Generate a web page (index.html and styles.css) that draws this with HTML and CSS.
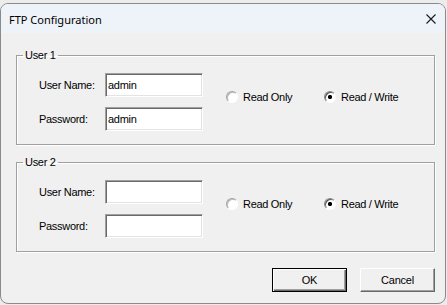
FILE: index.html
```html
<!DOCTYPE html>
<html>
<head>
	<title>FTP Configuration</title>
	<link rel="stylesheet" href="styles.css">
</head>
<body>
	<div class="window">
		<div class="titlebar">
			<span class="title">FTP Configuration</span>
			<svg class="close" width="10" height="10" viewBox="0 0 10 10">
				<path d="M0.5 0.5 L9.5 9.5 M9.5 0.5 L0.5 9.5" stroke="#1a1a1a" stroke-width="1.1" fill="none"/>
			</svg>
		</div>

		<div class="content">
			<fieldset class="group">
				<legend>User 1</legend>
				<div class="group-body">
					<div class="fields">
						<div class="field">
							<label>User Name:</label>
							<input type="text" class="text" value="admin">
						</div>
						<div class="field">
							<label>Password:</label>
							<input type="text" class="text" value="admin">
						</div>
					</div>
					<div class="access">
						<label class="radio first"><input type="radio" name="user1"> Read Only</label>
						<label class="radio"><input type="radio" name="user1" checked> Read / Write</label>
					</div>
				</div>
			</fieldset>

			<fieldset class="group">
				<legend>User 2</legend>
				<div class="group-body">
					<div class="fields">
						<div class="field">
							<label>User Name:</label>
							<input type="text" class="text" value="">
						</div>
						<div class="field">
							<label>Password:</label>
							<input type="text" class="text" value="">
						</div>
					</div>
					<div class="access">
						<label class="radio first"><input type="radio" name="user2"> Read Only</label>
						<label class="radio"><input type="radio" name="user2" checked> Read / Write</label>
					</div>
				</div>
			</fieldset>

			<div class="buttons">
				<button class="btn default">OK</button>
				<button class="btn">Cancel</button>
			</div>
		</div>
	</div>
</body>
</html>
```

FILE: styles.css
```css
body {
	margin: 0;
	padding: 3px 0 0;
	background-color: #ececec;
	font-family: "Liberation Sans", Arial, sans-serif;
	font-size: 11px;
	letter-spacing: -0.3px;
	color: #000;
}

.window {
	box-sizing: border-box;
	width: 446px;
	height: 301px;
	border: 1px solid #8a8a8a;
	border-radius: 8px;
	background-color: #f0f0f0;
	overflow: hidden;
}

.titlebar {
	display: flex;
	align-items: center;
	justify-content: space-between;
	height: 29px;
	padding: 0 9px 0 8px;
	background-color: #eef3f9;
}

.title {
	font-family: "Noto Sans", "Open Sans", sans-serif;
	font-size: 11px;
	letter-spacing: 0;
	color: #000;
	margin-top: 1px;
}

.close {
	margin-top: 1px;
}

.content {
	padding: 16px 10px 0 15px;
}

.group {
	margin: 0 0 11px;
	padding: 11px 0 13px;
	border: 1px solid #a0a0a0;
	box-shadow: 1px 1px 0 #fff, inset 1px 1px 0 #fff;
	min-width: 0;
}

.group legend {
	margin-left: 6px;
	padding: 0 2px;
	line-height: 13px;
}

.group-body {
	display: flex;
	padding-left: 22px;
}

.fields {
	display: flex;
	flex-direction: column;
	gap: 10px;
}

.field {
	display: flex;
	align-items: center;
}

.field label {
	width: 66px;
}

.text {
	box-sizing: border-box;
	width: 98px;
	height: 24px;
	margin: 0;
	padding: 0 2px;
	border: 1px solid;
	border-color: #a0a0a0 #fff #fff #a0a0a0;
	box-shadow: inset 1px 1px 0 #696969, inset -1px -1px 0 #e3e3e3;
	background-color: #fff;
	font-family: "Liberation Sans", Arial, sans-serif;
	font-size: 11px;
	letter-spacing: -0.3px;
	color: #000;
	outline: none;
}

.access {
	display: flex;
	align-items: center;
	align-self: center;
	margin: 0 0 10px 23px;
}

.radio {
	display: flex;
	align-items: center;
}

.radio.first {
	width: 98px;
}

.radio input {
	appearance: none;
	box-sizing: border-box;
	width: 12px;
	height: 12px;
	margin: 0 5px 0 0;
	border-radius: 50%;
	border: 1px solid;
	border-color: #a0a0a0 #fff #fff #a0a0a0;
	box-shadow: inset 1px 1px 0 #bdbdbd;
	background: #fff;
}

.radio input:checked {
	border-color: #888 #fff #fff #888;
	box-shadow: inset 1px 1px 0 #555;
	background: radial-gradient(circle, #000 0 1.8px, #fff 2.4px);
}

.buttons {
	display: flex;
	justify-content: flex-end;
	gap: 13px;
	margin-top: 16px;
}

.btn {
	box-sizing: border-box;
	width: 75px;
	height: 24px;
	margin: 0;
	padding: 0;
	border: 1px solid;
	border-color: #fff #696969 #696969 #fff;
	box-shadow: inset -1px -1px 0 #a0a0a0;
	background-color: #f0f0f0;
	font-family: "Liberation Sans", Arial, sans-serif;
	font-size: 11px;
	letter-spacing: -0.2px;
	color: #000;
}

.btn.default {
	border: 1px solid #000;
	box-shadow: inset 1px 1px 0 #fff, inset -1px -1px 0 #696969, inset -2px -2px 0 #a0a0a0;
}
```
